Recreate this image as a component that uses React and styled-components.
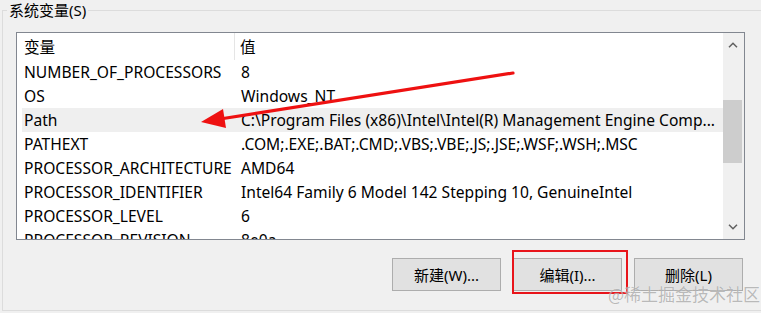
import React from "react";
import styled, { createGlobalStyle } from "styled-components";

const GlobalStyle = createGlobalStyle`
  html, body { margin: 0; padding: 0; background: #f0f0f0; overflow: hidden; }
  body { font-family: "Noto Sans", "Noto Sans CJK SC", sans-serif; color: #000; }
`;

const Page = styled.div`
  position: relative;
  width: 761px;
  height: 313px;
  overflow: hidden;
  padding-left: 2px;
  box-sizing: border-box;
`;

const Group = styled.fieldset`
  margin: 0;
  padding: 0;
  width: 775px;
  height: 311px;
  box-sizing: border-box;
  border: 1px solid #dcdcdc;
  min-inline-size: 0;
`;

const Legend = styled.legend`
  margin-left: 4px;
  padding: 0 2px;
  font-size: 15px;
  line-height: 20px;
`;

const Body = styled.div`
  padding: 12px 0 0 13px;
`;

const ListBox = styled.div`
  width: 729px;
  height: 208px;
  box-sizing: border-box;
  border: 1px solid #828790;
  background: #fff;
  display: flex;
`;

const Table = styled.div`
  flex: 1;
  display: flex;
  flex-direction: column;
  overflow: hidden;
  font-size: 15.6px;
`;

const Header = styled.div`
  height: 27px;
  flex: none;
  display: grid;
  grid-template-columns: 218px 1fr;
`;

const HeadCell = styled.div`
  display: flex;
  align-items: center;
  padding-left: ${(p) => p.$pad}px;
  border-right: ${(p) => (p.$divider ? "1px solid #e5e5e5" : "none")};
  white-space: nowrap;
`;

const Row = styled.div`
  height: 24px;
  flex: none;
  margin-left: 5px;
  display: grid;
  grid-template-columns: 213px 1fr;
  line-height: 24px;
  background: ${(p) => (p.$active ? "#efefef" : "transparent")};
`;

const Cell = styled.div`
  padding-left: ${(p) => p.$pad}px;
  white-space: nowrap;
  overflow: hidden;
`;

const ScrollBar = styled.div`
  width: 21px;
  flex: none;
  background: #f0f0f0;
  display: flex;
  flex-direction: column;
`;

const ArrowBtn = styled.div`
  height: 24px;
  flex: none;
  display: flex;
  align-items: center;
  justify-content: center;
  padding-right: 1px;
`;

const Track = styled.div`
  flex: 1;
  padding: 0 2px 0 0;
`;

const Thumb = styled.div`
  height: 63px;
  background: #cdcdcd;
`;

const ButtonRow = styled.div`
  width: 729px;
  margin-top: 18px;
  padding-right: 2px;
  box-sizing: border-box;
  display: flex;
  justify-content: flex-end;
  gap: 12px;
`;

const ButtonWrap = styled.div`
  position: relative;
`;

const Button = styled.button`
  width: 109px;
  height: 33px;
  box-sizing: border-box;
  border: 1px solid #adadad;
  background: #e1e1e1;
  font-family: "Noto Sans", "Noto Sans CJK SC", sans-serif;
  font-size: 15px;
  color: #000;
  padding: 0;
  display: block;
`;

const Annotation = styled.span`
  position: absolute;
  left: -1px;
  right: -6px;
  top: -8px;
  bottom: -3px;
  border: 2px solid #e8141a;
  pointer-events: none;
`;

const Watermark = styled.div`
  position: absolute;
  right: 1px;
  top: 283px;
  font-family: "Noto Sans CJK SC", sans-serif;
  font-size: 17px;
  line-height: 22px;
  color: rgba(120, 120, 120, 0.5);
  text-shadow: 0 0 1px rgba(255, 255, 255, 0.8);
  pointer-events: none;
  white-space: nowrap;
`;

const Overlay = styled.svg`
  position: absolute;
  left: 0;
  top: 0;
  pointer-events: none;
`;

const Chevron = ({ up }) => (
  <svg width="10" height="6" viewBox="0 0 10 6">
    <path
      d={up ? "M1 5.2 L5 1.2 L9 5.2" : "M1 0.8 L5 4.8 L9 0.8"}
      fill="none"
      stroke="#606060"
      strokeWidth="1.5"
    />
  </svg>
);

const rows = [
  ["NUMBER_OF_PROCESSORS", "8"],
  ["OS", "Windows_NT"],
  ["Path", "C:\\Program Files (x86)\\Intel\\Intel(R) Management Engine Comp...", true],
  ["PATHEXT", ".COM;.EXE;.BAT;.CMD;.VBS;.VBE;.JS;.JSE;.WSF;.WSH;.MSC"],
  ["PROCESSOR_ARCHITECTURE", "AMD64"],
  ["PROCESSOR_IDENTIFIER", "Intel64 Family 6 Model 142 Stepping 10, GenuineIntel"],
  ["PROCESSOR_LEVEL", "6"],
  ["PROCESSOR_REVISION", "8e0a"],
];

export default function App() {
  return (
    <>
      <GlobalStyle />
      <Page>
        <Group>
          <Legend>系统变量(S)</Legend>
          <Body>
            <ListBox>
              <Table>
                <Header>
                  <HeadCell $pad={7} $divider>变量</HeadCell>
                  <HeadCell $pad={5}>值</HeadCell>
                </Header>
                {rows.map(([k, v, active]) => (
                  <Row key={k} $active={active}>
                    <Cell $pad={2}>{k}</Cell>
                    <Cell $pad={6}>{v}</Cell>
                  </Row>
                ))}
              </Table>
              <ScrollBar>
                <ArrowBtn><Chevron up /></ArrowBtn>
                <Track>
                  <Thumb style={{ marginTop: 43 }} />
                </Track>
                <ArrowBtn><Chevron /></ArrowBtn>
              </ScrollBar>
            </ListBox>
            <ButtonRow>
              <ButtonWrap><Button>新建(W)...</Button></ButtonWrap>
              <ButtonWrap>
                <Button>编辑(I)...</Button>
                <Annotation />
              </ButtonWrap>
              <ButtonWrap><Button>删除(L)</Button></ButtonWrap>
            </ButtonRow>
          </Body>
        </Group>
        <Overlay width="761" height="313" viewBox="0 0 761 313">
          <line x1="513" y1="73" x2="220" y2="119" stroke="#ee1111" strokeWidth="3.2" strokeLinecap="round" />
          <polygon points="201,122 223,109 226,128" fill="#ee1111" />
        </Overlay>
        <Watermark>@稀土掘金技术社区</Watermark>
      </Page>
    </>
  );
}
